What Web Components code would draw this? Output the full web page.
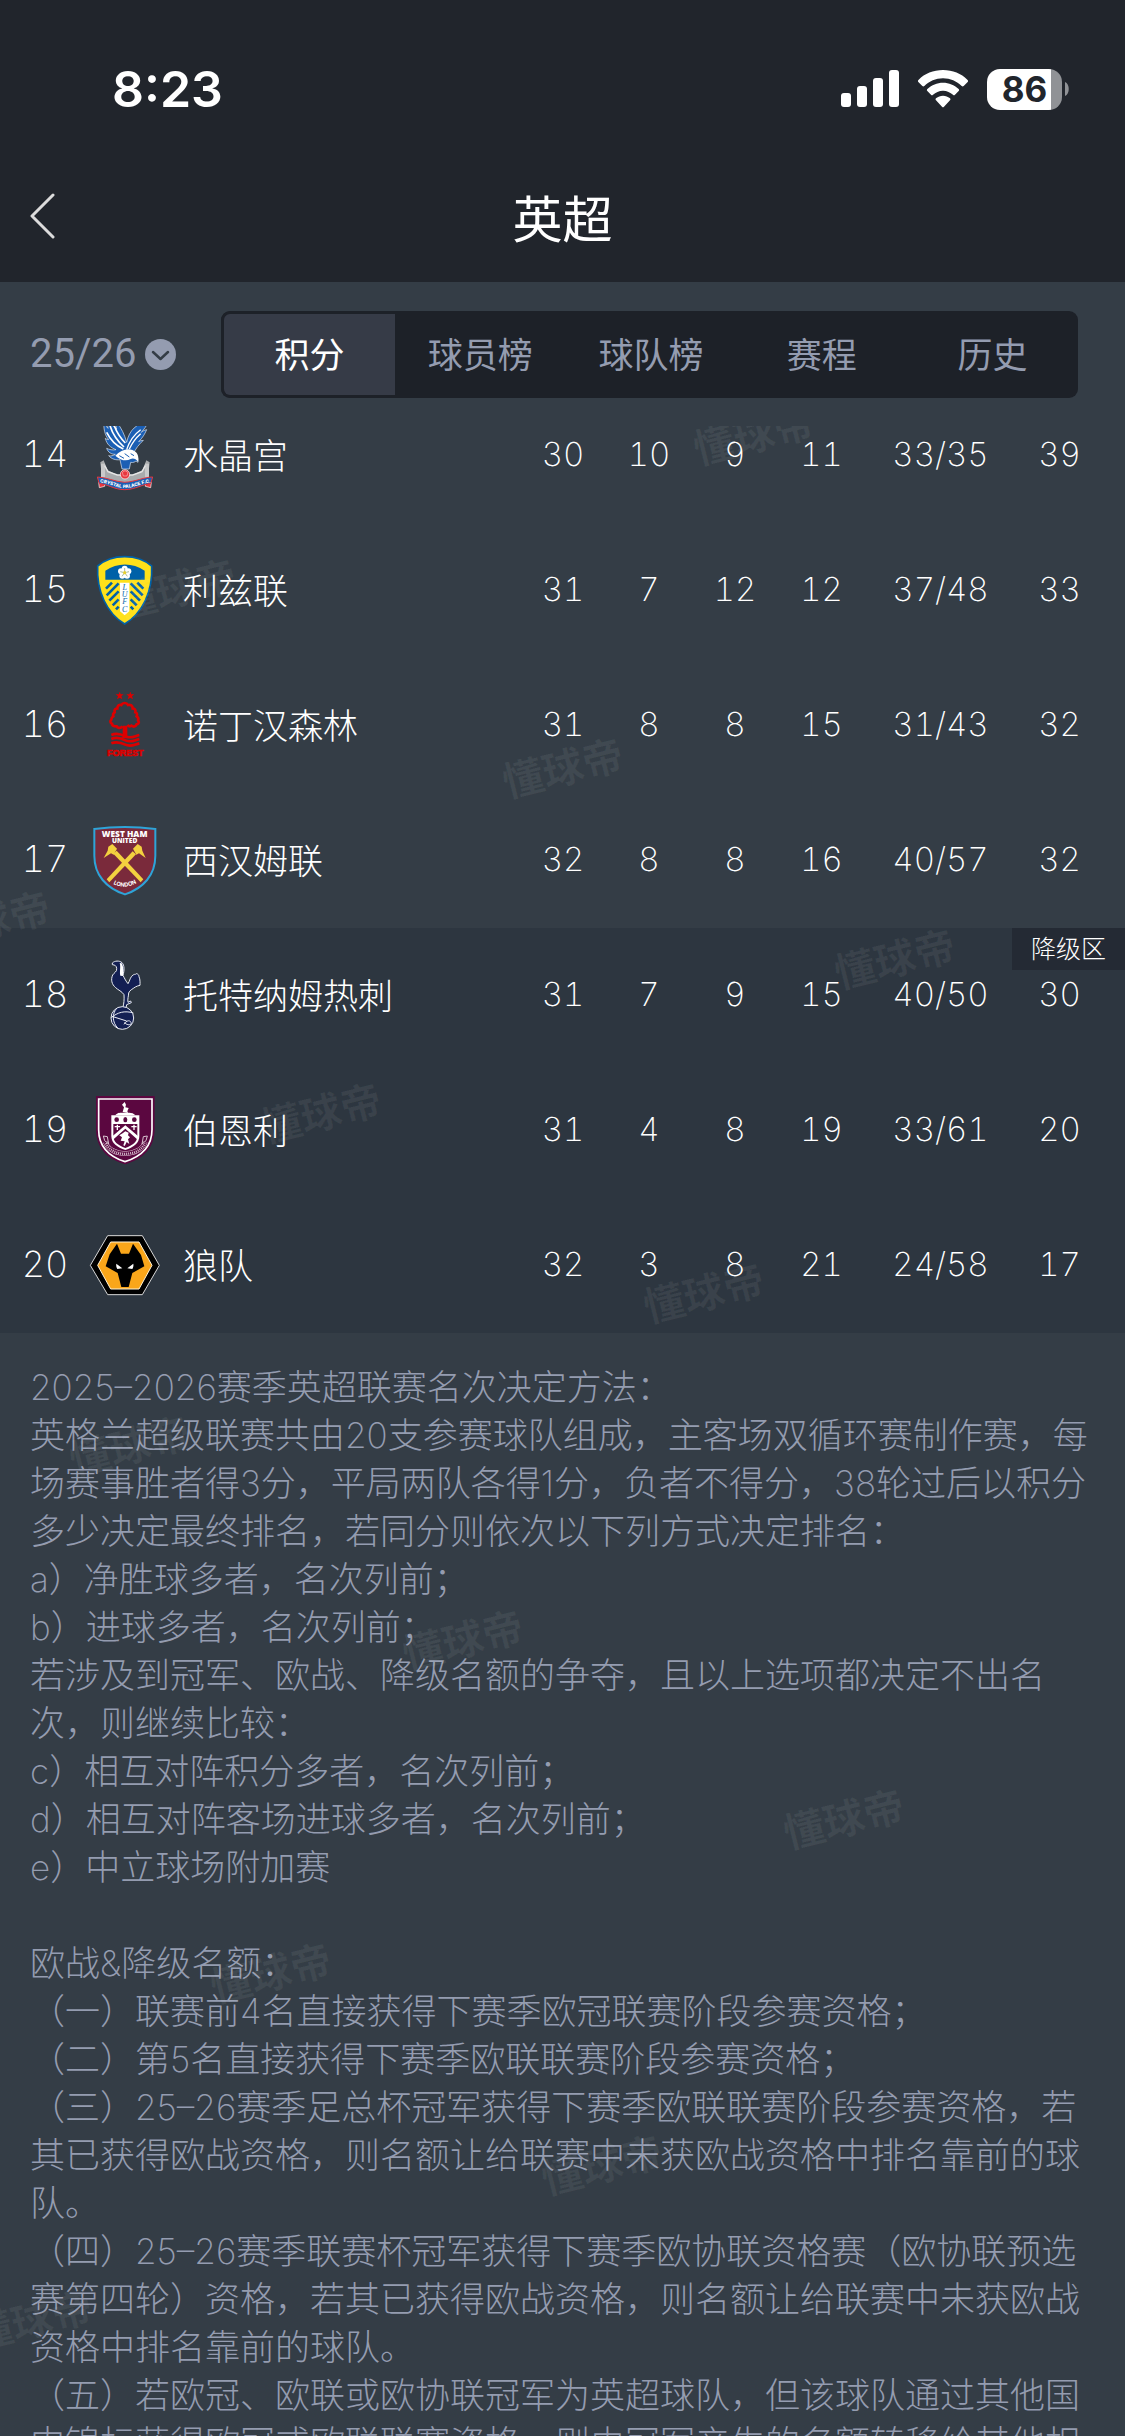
<!DOCTYPE html>
<html lang="zh-CN">
<head>
<meta charset="UTF-8">
<meta name="viewport" content="width=device-width, initial-scale=1">
<title>英超</title>
<style>
    :root {
        --bar: #21252c;
        --page: #343d46;
        --zone: #2d3640;
        --tag: #242a34;
        --track: #1d2128;
        --thumb: #363b47;
        --muted: #949cb0;
        --text: #ffffff;
    }
    body {
        margin: 0;
        height: 100vh;
        overflow: hidden;
        background: var(--page);
        color: var(--text);
        font-family: Inter, "Noto Sans CJK SC", sans-serif;
    }
</style>
</head>
<body>
<league-page>
    <status-bar slot="top" time="8:23" battery="86"></status-bar>
    <nav-bar slot="top">英超</nav-bar>
    <filter-bar slot="top" season="25/26" tabs="积分,球员榜,球队榜,赛程,历史" active="积分"></filter-bar>

    <standings-table></standings-table>

    <rule-notes>
        <rule-section>
            <p>2025–2026赛季英超联赛名次决定方法：</p>
            <p>英格兰超级联赛共由20支参赛球队组成，主客场双循环赛制作赛，每场赛事胜者得3分，平局两队各得1分，负者不得分，38轮过后以积分多少决定最终排名，若同分则依次以下列方式决定排名：</p>
            <p>a）净胜球多者，名次列前；</p>
            <p>b）进球多者，名次列前；</p>
            <p>若涉及到冠军、欧战、降级名额的争夺，且以上选项都决定不出名次，则继续比较：</p>
            <p>c）相互对阵积分多者，名次列前；</p>
            <p>d）相互对阵客场进球多者，名次列前；</p>
            <p>e）中立球场附加赛</p>
        </rule-section>
        <rule-section>
            <p>欧战&amp;降级名额：</p>
            <p>（一）联赛前4名直接获得下赛季欧冠联赛阶段参赛资格；</p>
            <p>（二）第5名直接获得下赛季欧联联赛阶段参赛资格；</p>
            <p>（三）25–26赛季足总杯冠军获得下赛季欧联联赛阶段参赛资格，若其已获得欧战资格，则名额让给联赛中未获欧战资格中排名靠前的球队。</p>
            <p>（四）25–26赛季联赛杯冠军获得下赛季欧协联资格赛（欧协联预选赛第四轮）资格，若其已获得欧战资格，则名额让给联赛中未获欧战资格中排名靠前的球队。</p>
            <p>（五）若欧冠、欧联或欧协联冠军为英超球队，但该球队通过其他国内锦标获得欧冠或欧联联赛资格，则由冠军产生的名额转移给其他相</p>
        </rule-section>
    </rule-notes>

    <water-mark slot="marks"></water-mark>
</league-page>

<script>
class BaseElement extends HTMLElement {
    constructor() {
        super();
        this.attachShadow({ mode: 'open' });
    }

    connectedCallback() {
        this.render();
    }
}

/** 页面骨架：固定的顶部 + 被裁切的滚动区 */
class LeaguePage extends BaseElement {
    render() {
        this.shadowRoot.innerHTML = `
        <style>
            :host { display: flex; flex-direction: column; height: 100%; }
            .scroller { position: relative; flex: 1; min-height: 0; overflow: hidden; }
            /* 列表已滚动了一小段 */
            .content { margin-top: -38px; }
        </style>
        <header><slot name="top"></slot></header>
        <main class="scroller">
            <div class="content"><slot></slot></div>
            <slot name="marks"></slot>
        </main>
        `;
    }
}

class StatusBar extends BaseElement {
    render() {
        const time = this.getAttribute('time');
        const battery = this.getAttribute('battery');

        this.shadowRoot.innerHTML = `
        <style>
            :host {
                display: flex;
                justify-content: space-between;
                align-items: center;
                box-sizing: border-box;
                height: 150px;
                padding: 28px 56px 0 112px;
                background: var(--bar);
            }
            time { font-size: 50px; font-weight: 600; line-height: 60px; }
            .icons { display: flex; align-items: center; gap: 19px; }
            svg { display: block; fill: #fff; }
            .power { display: flex; align-items: center; gap: 3px; }
            .battery {
                width: 75px;
                height: 41px;
                border-radius: 13px;
                background: linear-gradient(90deg, #fff ${battery}%, #909296 ${battery}%);
                color: var(--bar);
                font-size: 35px;
                font-weight: 700;
                line-height: 41px;
                text-align: center;
            }
        </style>
        <time>${time}</time>
        <div class="icons">
            <svg width="58" height="38" viewBox="0 0 58 38">
                <rect x="0" y="23" width="10" height="14" rx="3"/>
                <rect x="16" y="16" width="10" height="21" rx="3"/>
                <rect x="32" y="8" width="10" height="29" rx="3"/>
                <rect x="48" y="0" width="10" height="37" rx="3"/>
            </svg>
            <svg width="50" height="38" viewBox="0 0 150 114">
                <path d="M75 0C46 0 20 11 2 29c-3 3-3 5-1 7l12 12c2 2 4 2 6 0C34 34 53 25 75 25s41 9 56 23c2 2 4 2 6 0l12-12c2-2 2-4-1-7C130 11 104 0 75 0z"/>
                <path d="M75 38c-18 0-34 7-46 18-3 2-3 5-1 7l11 11c2 2 4 2 6 0 8-7 18-12 30-12s22 5 30 12c2 2 4 2 6 0l11-11c2-2 2-5-1-7C109 45 93 38 75 38z"/>
                <path d="M75 77c-8 0-15 3-20 7-3 2-3 5-1 7l18 19c2 2 4 2 6 0l18-19c2-2 2-5-1-7-5-4-12-7-20-7z"/>
            </svg>
            <div class="power">
                <div class="battery">${battery}</div>
                <svg width="4" height="14" viewBox="0 0 4 14"><path d="M0 0c5 2 5 12 0 14z" fill="#909296"/></svg>
            </div>
        </div>
        `;
    }
}

class NavBar extends BaseElement {
    render() {
        this.shadowRoot.innerHTML = `
        <style>
            :host {
                display: grid;
                grid-template-columns: 1fr auto 1fr;
                align-items: center;
                height: 132px;
                padding: 0 28px;
                background: var(--bar);
            }
            button { justify-self: start; padding: 0; border: 0; background: none; }
            svg { display: block; fill: none; stroke: #dcdcdc; stroke-width: 3; stroke-linecap: round; stroke-linejoin: round; }
            h1 { margin: 0; padding-top: 8px; font-size: 50px; font-weight: 400; line-height: 60px; }
        </style>
        <button aria-label="返回">
            <svg width="28" height="46" viewBox="0 0 28 46"><path d="M25 2 4 23l21 21"/></svg>
        </button>
        <h1><slot></slot></h1>
        `;
    }
}

class FilterBar extends BaseElement {
    render() {
        const season = this.getAttribute('season');
        const active = this.getAttribute('active');
        const tabs = this.getAttribute('tabs').split(',');

        this.shadowRoot.innerHTML = `
        <style>
            :host {
                display: flex;
                align-items: center;
                justify-content: space-between;
                box-sizing: border-box;
                height: 144px;
                padding: 0 47px 0 30px;
                background: var(--page);
            }
            label { display: flex; align-items: center; gap: 8px; width: 191px; }
            select {
                appearance: none;
                padding: 0;
                border: 0;
                background: none;
                color: var(--muted);
                font: 400 40px/46px Roboto, sans-serif;
            }
            svg { display: block; }
            nav {
                display: flex;
                flex: 1;
                height: 87px;
                border-radius: 9px;
                background: var(--track);
                overflow: hidden;
            }
            button {
                flex: 1 1 0;
                padding: 0 0 4px;
                border: 0;
                background: none;
                color: var(--muted);
                font: inherit;
                font-size: 35px;
            }
            button[aria-pressed="true"] {
                border: solid var(--track);
                border-width: 3px 0 3px 3px;
                border-radius: 9px 0 0 9px;
                background: var(--thumb);
                color: var(--text);
            }
        </style>
        <label>
            <select aria-label="赛季"><option>${season}</option></select>
            <svg width="31" height="31" viewBox="0 0 31 31">
                <circle cx="15.5" cy="15.5" r="15.5" fill="#949cb0"/>
                <path d="M8 13l7.500 7 7.500-7" fill="none" stroke="#343d46" stroke-width="2.500" stroke-linecap="round" stroke-linejoin="round"/>
            </svg>
        </label>
        <nav>
            ${tabs.map(t => `<button aria-pressed="${t === active}">${t}</button>`).join('')}
        </nav>
        `;
    }
}

const CRESTS = {
    palace: `
        <path d="M38 190l-7-66 10-6 12 30 30 14h44l30-14 12-30 10 6-7 66z" fill="#a9abad"/>
        <path d="M33 128h12v44H33zM165 128h12v44h-12z" fill="#c9cacb"/>
        <path d="M44 134l10 18 28 10h46l28-10 10-18" fill="none" stroke="#e6e6e6" stroke-width="4"/>
        <g fill="#1b5fb4" stroke="#dfe9f5" stroke-width="2">
            <path d="M42 0c-2 22 2 42 14 56-4 0-8-2-10-4 4 18 16 28 32 34-10 2-20 0-28-4 4 12 14 18 26 18-6 4-14 6-20 4 8 10 22 14 34 12l6 28h22l4-20c8 2 14-2 16-4l6 4c2-12-4-22-14-24 6-18 18-30 30-42-6 0-10 2-14 4 12-12 18-22 24-36-8 2-12 4-16 8 8-10 16-18 20-32-34 6-56 24-64 62-6-22-16-44-30-60-2 8-2 14 0 20C64 12 60 6 56-2c-4 8-4 16-2 24-6-6-10-14-12-22z"/>
        </g>
        <path d="M60 14c8 26 22 46 42 64M72 12c8 22 18 38 34 54M50 34c12 24 28 40 50 50" fill="none" stroke="#fff" stroke-width="5"/>
        <path d="M110 86c8-26 20-44 42-60M118 84c8-18 18-32 34-46" fill="none" stroke="#fff" stroke-width="4"/>
        <path d="M76 104c18-20 46-26 62-10 8 8 8 20 6 28-6-8-14-12-22-8-14 8-30 4-46-10z" fill="#fff"/>
        <path d="M88 104l14 8M104 98l14 10M122 98l10 6" stroke="#1b5fb4" stroke-width="3"/>
        <circle cx="105" cy="160" r="14" fill="#e8363d" stroke="#fff" stroke-width="2"/>
        <path d="M97 154l8-5 9 5-3 11h-11z" fill="none" stroke="#f7b3b5" stroke-width="2"/>
        <path d="M26 184l18-6v18l-16 4zM184 184l-18-6v18l16 4z" fill="#e8363d" stroke="#fff" stroke-width="2"/>
        <path d="M22 168c26 0 50 14 82 16 34-2 58-16 84-16l-6 20c-22 0-46 18-78 18s-54-18-76-18z" fill="#1b5fb4" stroke="#e8363d" stroke-width="3"/>
        <path id="ribbon" d="M32 185c26 2 46 16 74 16 26 0 48-14 74-16" fill="none"/>
        <text font-size="14" font-weight="800" fill="#fff" text-anchor="middle"><textPath href="#ribbon" startOffset="50%">CRYSTAL PALACE F.C.</textPath></text>`,
    leeds: `
        <path d="M104 2c34 0 60 10 81 28 4 76-28 142-81 174C51 172 19 106 23 30 44 12 70 2 104 2z" fill="#ffe11a" stroke="#0061a8" stroke-width="5"/>
        <path d="M46 44c36-25 82-25 118 0v27H46z" fill="#0061a8"/>
        <g fill="#fff"><circle cx="104" cy="38" r="9"/><circle cx="115" cy="46" r="9"/><circle cx="111" cy="59" r="9"/><circle cx="97" cy="59" r="9"/><circle cx="93" cy="46" r="9"/></g>
        <circle cx="104" cy="50" r="5" fill="#e6cf32"/>
        <path d="M104 36v9M117 47l-8 2M112 61l-5-7M96 61l5-7M91 47l8 2" stroke="#7a9a66" stroke-width="2"/>
        <g fill="none" stroke="#0061a8" stroke-width="8">
            <path d="M48 98l18-18M50 118l36-36M58 134l28-28M68 148l18-18M78 160l8-8"/>
            <path d="M160 98l-18-18M158 118l-36-36M150 134l-28-28M140 148l-18-18M130 160l-8-8"/>
        </g>
        <path d="M90 80h28v86l-14 12-14-12z" fill="#fff"/>
        <g font-family="Liberation Serif" font-style="italic" font-size="24" fill="#0061a8" text-anchor="middle">
            <text x="104" y="101">L</text><text x="104" y="122">U</text><text x="104" y="144">F</text><text x="104" y="167">C</text>
        </g>`,
    forest: `
        <g fill="#dd0000">
            <path d="M89 2l3 8h9l-7 6 3 9-8-5-8 5 3-9-7-6h9zM121 2l3 8h9l-7 6 3 9-8-5-8 5 3-9-7-6h9z"/>
            <path d="M98 104h14v34l8 4H90l8-4z"/>
        </g>
        <path d="M98 106c-8 8-16 4-18 0-8 0-14-2-14-8-6-2-6-8-2-12 0-6 2-8 6-10-2-6 0-10 4-12-2-8 2-12 8-12 0-8 6-12 12-10 4-8 16-8 20 0 8-2 14 2 14 10 6 0 10 6 8 12 6 2 6 8 4 12 6 4 6 8 4 12 4 6 2 12-4 12-4 8-10 8-16 4-4 4-8 2-12-2" fill="none" stroke="#dd0000" stroke-width="8"/>
        <g fill="none" stroke="#dd0000" stroke-width="8">
            <path d="M64 132c14-6 26-4 42 4s26 0 42-4"/>
            <path d="M64 144c14-6 26-4 42 4s26 0 42-4"/>
            <path d="M64 157c14-6 26-4 42 4s26 0 42-4"/>
        </g>
        <text x="106" y="194" font-family="Liberation Sans Narrow, Liberation Sans" font-size="27" font-weight="700" fill="#dd0000" stroke="#dd0000" stroke-width="2" text-anchor="middle">FOREST</text>`,
    westham: `
        <path d="M13 9c60-8 122-8 183 0v80c0 58-36 98-91 116C49 187 13 147 13 89z" fill="#7a2a3b" stroke="#2ea4d8" stroke-width="6"/>
        <g font-family="Open Sans" font-weight="800" fill="#fff" text-anchor="middle">
            <text x="104" y="34" font-size="25">WEST HAM</text>
            <text x="104" y="51" font-size="20">UNITED</text>
        </g>
        <g fill="#f3d13f">
            <path d="M50 160l78-84 10 9-80 84z"/>
            <path d="M160 160L80 74l-10 9 82 86z"/>
            <path d="M129 68l14-14 12 8 2 12 10 22-20-14-8 4z"/>
            <path d="M81 68L67 54l-12 8-2 12-12 22 22-14 8 4z"/>
        </g>
        <path id="hoop" d="M72 175q33 16 66-3" fill="none"/>
        <text font-size="17" font-weight="700" fill="#fff" text-anchor="middle"><textPath href="#hoop" startOffset="50%">LONDON</textPath></text>`,
    spurs: `
        <g fill="#131f53" stroke="#e9ecf3" stroke-width="3" stroke-linejoin="round">
            <path d="M67 6C74-1 88-2 96 5c8 8 7 24 3 38 5 10 9 18 15 25 6-8 6-22 17-27 4-2 6 0 8-3 6 1 8 5 8 9 4 8 3 20 3 26-6 1-10 3-14 5-8 6-18 10-20 18 0 8-4 18-2 28l8-4 2 5-14 6-2 10H98c4-12 5-26 4-40-6-10-18-14-25-21-12-10-15-24-9-38 4-7 14-10 12-20-1-8-5-10-13-11z"/>
            <circle cx="97" cy="171" r="34"/>
        </g>
        <path d="M89 6c4 10-1 28 2 38l8 1c2-14 2-28-4-38z" fill="#fff"/>
        <g fill="none" stroke="#e9ecf3" stroke-width="3">
            <path d="M64 170c18-16 40-22 66-14M80 142c-14 16-14 42 4 60M66 166l44 14M102 190c14-22 26-4 20 0s-18-2-18-6"/>
        </g>`,
    burnley: `
        <path d="M18 0h176v100c0 56-36 90-89 105C52 190 18 156 18 100z" fill="#5b0740"/>
        <path d="M26 9h160v92c0 50-32 80-81 96-49-16-79-46-79-96z" fill="none" stroke="#fff" stroke-width="5"/>
        <path d="M64 58h84v62c0 22-18 34-42 42-24-8-42-20-42-42z" fill="#fff"/>
        <path d="M70 84h72v36c0 18-14 28-36 36-22-8-36-18-36-36z" fill="#5b0740"/>
        <path d="M68 120l38-32 38 32v12l-38-34-38 34z" fill="#fff"/>
        <g fill="#5b0740"><circle cx="80" cy="71" r="7"/><ellipse cx="106" cy="71" rx="6" ry="8"/><circle cx="133" cy="71" r="7"/></g>
        <g fill="#fff">
            <path d="M76 58c4-8 14-8 18-8h24c6 0 14 2 18 8zM98 48l4-14-6-8 8-8 4 8-2 8 10 2-4 10 2 4z"/>
            <path d="M98 112l8-6 10 4-2 8 6 6-6 6 4 14-8-6-6 12-4-2 4-12-12-2 4-10-8-6z"/>
            <path d="M74 90h6v-4h4v4h6v4h-6v8h-4v-8h-6zM124 90h6v-4h4v4h6v4h-6v8h-4v-8h-6z"/>
        </g>
        <path d="M46 138c16 46 102 46 120 0" fill="none" stroke="#d9c3d1" stroke-width="14"/>
        <path d="M46 138c16 46 102 46 120 0" fill="none" stroke="#5b0740" stroke-width="11"/>
        <path d="M44 134l-4-14 12 2 4 22zM168 134l4-14-12 2-4 22z" fill="none" stroke="#d9c3d1" stroke-width="3"/>
        <path d="M48 142c18 42 98 42 116 0" fill="none" stroke="#d9c3d1" stroke-width="7" stroke-dasharray="3 3"/>`,
    wolves: `
        <path d="M1 103l52-89h104l51 89-51 88H53z" fill="#000" stroke="#d8d8d8" stroke-width="3"/>
        <path d="M23 103l39-70h85l39 70-39 71H62z" fill="#faa61a" stroke="#fff3d6" stroke-width="3"/>
        <path d="M81 38l12 30h24l12-30 24 34 10 34-36 20-11 42H94l-11-42-36-20 12-36z" fill="#000"/>
        <path d="M79 98l18 14-15 2c-3-6-4-10-3-16zM130 98l-18 14 15 2c3-6 4-10 3-16z" fill="#fff"/>`
};

class ClubCrest extends BaseElement {
    render() {
        this.shadowRoot.innerHTML = `
        <style>
            :host { display: block; width: 70px; height: 70px; }
            svg { display: block; width: 100%; height: 100%; overflow: visible; }
        </style>
        <svg viewBox="0 0 210 210">${CRESTS[this.getAttribute('club')]}</svg>
        `;
    }
}

// 排名, 队徽, 球队, 场次, 胜, 平, 负, 进/失, 积分
const TEAMS = [
    [14, 'palace', '水晶宫', 30, 10, 9, 11, '33/35', 39],
    [15, 'leeds', '利兹联', 31, 7, 12, 12, '37/48', 33],
    [16, 'forest', '诺丁汉森林', 31, 8, 8, 15, '31/43', 32],
    [17, 'westham', '西汉姆联', 32, 8, 8, 16, '40/57', 32],
    [18, 'spurs', '托特纳姆热刺', 31, 7, 9, 15, '40/50', 30],
    [19, 'burnley', '伯恩利', 31, 4, 8, 19, '33/61', 20],
    [20, 'wolves', '狼队', 32, 3, 8, 21, '24/58', 17]
];
const DROP_FROM = 18;
const COLUMNS = [90, 93, 'auto', 86, 86, 86, 87, 151, 109];

class StandingsTable extends BaseElement {
    renderRow([rank, club, name, ...stats]) {
        const points = stats.pop();
        const tag = rank === DROP_FROM ? '<span class="tag">降级区</span>' : '';
        return `
            <tr class="${rank >= DROP_FROM ? 'drop' : ''}">
                <td class="rank">${rank}</td>
                <td class="crest"><club-crest club="${club}"></club-crest></td>
                <th scope="row">${name}</th>
                ${stats.map(s => `<td>${s}</td>`).join('')}
                <td class="points">${points}${tag}</td>
            </tr>`;
    }

    render() {
        this.shadowRoot.innerHTML = `
        <style>
            :host { display: block; font-variant-numeric: tabular-nums; }
            table { width: 100%; table-layout: fixed; border-collapse: collapse; }
            tr { height: 135px; }
            td { padding: 0 0 3px; font-size: 33px; font-weight: 200; line-height: 40px; text-align: center; }
            th { padding: 0; font-size: 35px; font-weight: 300; line-height: 40px; text-align: left; white-space: nowrap; }
            .rank { font-size: 36px; }
            .crest { padding: 0; }
            .points { padding-right: 22px; }
            .drop { position: relative; background: var(--zone); }
            .tag {
                position: absolute;
                top: 0;
                right: 0;
                padding: 0 19px;
                background: var(--tag);
                font-size: 25px;
                font-weight: 300;
                line-height: 42px;
            }
        </style>
        <table>
            <colgroup>${COLUMNS.map(w => `<col style="width: ${w === 'auto' ? w : w + 'px'}">`).join('')}</colgroup>
            <tbody>${TEAMS.map(t => this.renderRow(t)).join('')}</tbody>
        </table>
        `;
    }
}

class RuleNotes extends BaseElement {
    render() {
        this.shadowRoot.innerHTML = `
        <style>
            :host {
                display: flex;
                flex-direction: column;
                gap: 48px;
                padding: 30px 20px 30px 30px;
                color: var(--muted);
                font-size: 35px;
                font-weight: 200;
                line-height: 48px;
            }
        </style>
        <slot></slot>
        `;
    }
}

class RuleSection extends BaseElement {
    render() {
        this.shadowRoot.innerHTML = `
        <style>
            :host { display: block; }
            ::slotted(p) { margin: 0; }
        </style>
        <slot></slot>
        `;
    }
}

// 水印中心点，相对滚动区左上角
const MARKS = [
    [754, 10], [176, 164], [563, 343], [-10, 496], [895, 534], [321, 688], [704, 868],
    [130, 1021], [463, 1215], [844, 1394], [271, 1548], [602, 1740], [32, 1895]
];

class WaterMark extends BaseElement {
    render() {
        this.shadowRoot.innerHTML = `
        <style>
            :host { position: absolute; inset: 0; overflow: hidden; pointer-events: none; }
            span {
                position: absolute;
                transform: translate(-50%, -50%) rotate(-14deg);
                color: rgba(255, 255, 255, 0.06);
                font-size: 41px;
                font-weight: 700;
                line-height: 41px;
                white-space: nowrap;
            }
        </style>
        ${MARKS.map(([x, y]) => `<span style="left: ${x}px; top: ${y}px">懂球帝</span>`).join('')}
        `;
    }
}

customElements.define('league-page', LeaguePage);
customElements.define('status-bar', StatusBar);
customElements.define('nav-bar', NavBar);
customElements.define('filter-bar', FilterBar);
customElements.define('club-crest', ClubCrest);
customElements.define('standings-table', StandingsTable);
customElements.define('rule-notes', RuleNotes);
customElements.define('rule-section', RuleSection);
customElements.define('water-mark', WaterMark);
</script>
</body>
</html>
